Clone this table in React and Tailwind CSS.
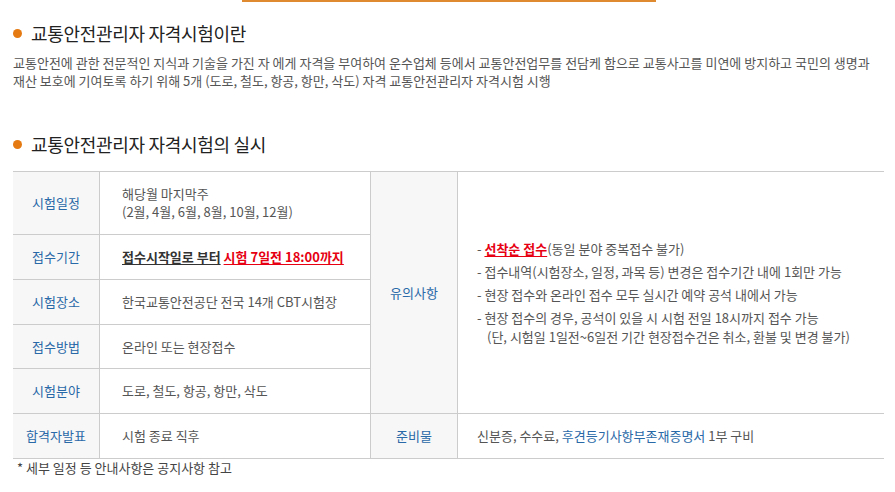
// App.jsx
const LABEL = "flex items-center justify-center bg-[#f7f7f7] border-r border-b border-[#cccccc] text-[13px] text-[#2a69a8]";
const CELL = "flex items-center border-r border-b border-[#cccccc] pl-[22px] text-[13px] text-[#555555]";

function Heading({ children }) {
  return (
    <h2 className="flex items-center gap-[9px] text-[18px] leading-[24px] tracking-[-0.3px] text-[#222222]">
      <span className="h-[9px] w-[9px] shrink-0 rounded-full bg-[#e57a12]" />
      {children}
    </h2>
  );
}

export default function App() {
  return (
    <div className="relative h-[492px] w-[895px] overflow-hidden bg-white font-['Noto_Sans_CJK_KR','Noto_Sans',sans-serif]">
      {/* top accent bar */}
      <div className="ml-[242px] h-[2px] w-[414px] bg-[#df8a30]" />

      <div className="pl-[13px] pt-[19px]">
        <Heading>교통안전관리자 자격시험이란</Heading>

        <div className="mt-[9px] text-[13px] leading-[18px] text-[#555555]">
          <p className="whitespace-nowrap">
            교통안전에 관한 전문적인 지식과 기술을 가진 자 에게 자격을 부여하여 운수업체 등에서 교통안전업무를 전담케 함으로 교통사고를 미연에 방지하고 국민의 생명과
          </p>
          <p className="whitespace-nowrap">
            재산 보호에 기여토록 하기 위해 5개 (도로, 철도, 항공, 항만, 삭도) 자격 교통안전관리자 자격시험 시행
          </p>
        </div>

        <div className="mt-[42px]">
          <Heading>교통안전관리자 자격시험의 실시</Heading>
        </div>

        {/* exam table */}
        <div className="mt-[15px] grid w-[871px] grid-cols-[87px_271px_87px_1fr] grid-rows-[63px_45px_45px_44px_45px_45px] border-t border-[#cccccc]">
          <div className={LABEL}>시험일정</div>
          <div className={`${CELL} leading-[18px]`}>
            <div>
              <p>해당월 마지막주</p>
              <p>(2월, 4월, 6월, 8월, 10월, 12월)</p>
            </div>
          </div>
          <div className={`${LABEL} row-span-5`}>유의사항</div>
          <div className="row-span-5 flex items-center border-b border-[#cccccc] pl-[19px] text-[13px] leading-[19px] text-[#555555]">
            <ul className="flex flex-col gap-[4px]">
              <li>
                -{" "}
                <span className="font-bold text-[#e60012] underline decoration-[#e60012] underline-offset-2">
                  선착순 접수
                </span>
                (동일 분야 중복접수 불가)
              </li>
              <li>- 접수내역(시험장소, 일정, 과목 등) 변경은 접수기간 내에 1회만 가능</li>
              <li>- 현장 접수와 온라인 접수 모두 실시간 예약 공석 내에서 가능</li>
              <li>
                <p>- 현장 접수의 경우, 공석이 있을 시 시험 전일 18시까지 접수 가능</p>
                <p className="pl-[10px]">
                  (단, 시험일 1일전~6일전 기간 현장접수건은 취소, 환불 및 변경 불가)
                </p>
              </li>
            </ul>
          </div>

          <div className={LABEL}>접수기간</div>
          <div className={`${CELL} font-bold`}>
            <span className="text-[#333333] underline decoration-[#333333] underline-offset-2">접수시작일로 부터</span>
            <span>&nbsp;</span>
            <span className="text-[#e60012] underline decoration-[#e60012] underline-offset-2">시험 7일전 18:00까지</span>
          </div>

          <div className={LABEL}>시험장소</div>
          <div className={CELL}>한국교통안전공단 전국 14개 CBT시험장</div>

          <div className={LABEL}>접수방법</div>
          <div className={CELL}>온라인 또는 현장접수</div>

          <div className={LABEL}>시험분야</div>
          <div className={CELL}>도로, 철도, 항공, 항만, 삭도</div>

          <div className={LABEL}>합격자발표</div>
          <div className={CELL}>시험 종료 직후</div>
          <div className={LABEL}>준비물</div>
          <div className="flex items-center border-b border-[#cccccc] pl-[19px] text-[13px] text-[#555555]">
            신분증, 수수료,&nbsp;<span className="text-[#2a69a8]">후견등기사항부존재증명서</span>&nbsp;1부 구비
          </div>
        </div>

        <p className="pl-[4px] text-[13px] leading-[18px] text-[#444444]">* 세부 일정 등 안내사항은 공지사항 참고</p>
      </div>
    </div>
  );
}
